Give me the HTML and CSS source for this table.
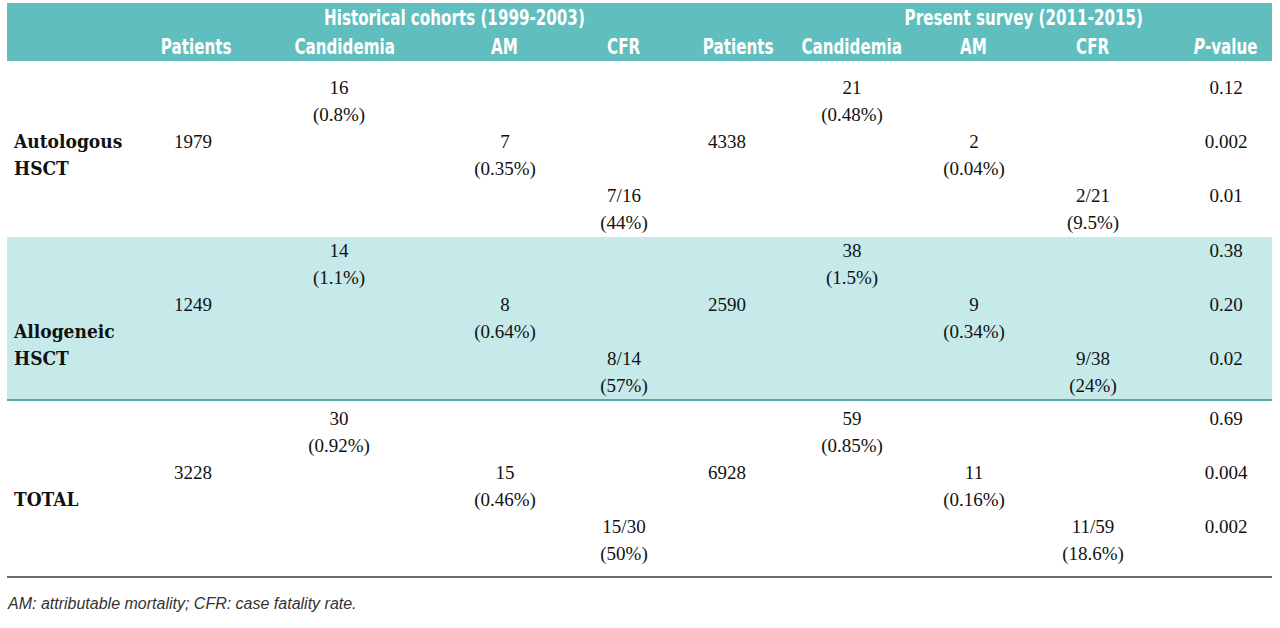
FILE: index.html
```html
<!DOCTYPE html>
<html>
<head>
<meta charset="utf-8">
<link rel="stylesheet" href="styles.css">
</head>
<body>
<div class="table">
  <div class="head">
    <div class="grp grp-hist"><span class="ht">Historical cohorts (1999-2003)</span></div>
    <div class="grp grp-pres"><span class="ht">Present survey (2011-2015)</span></div>
    <div class="hc c1"><span class="ht">Patients</span></div>
    <div class="hc c2"><span class="ht">Candidemia</span></div>
    <div class="hc c3"><span class="ht">AM</span></div>
    <div class="hc c4"><span class="ht">CFR</span></div>
    <div class="hc c5"><span class="ht">Patients</span></div>
    <div class="hc c6"><span class="ht">Candidemia</span></div>
    <div class="hc c7"><span class="ht">AM</span></div>
    <div class="hc c8"><span class="ht">CFR</span></div>
    <div class="hc c9"><span class="ht"><i>P</i>-value</span></div>
  </div>

  <div class="group g1">
    <div class="label lab-3">Autologous<br>HSCT</div>
    <div class="cell c2 r1 cand1">16<br>(0.8%)</div>
    <div class="cell c1 r2">1979</div>
    <div class="cell c3 r2">7<br>(0.35%)</div>
    <div class="cell c4 r3">7/16<br>(44%)</div>
    <div class="cell c6 r1">21<br>(0.48%)</div>
    <div class="cell c5 r2">4338</div>
    <div class="cell c7 r2">2<br>(0.04%)</div>
    <div class="cell c8 r3">2/21<br>(9.5%)</div>
    <div class="cell c9 r1">0.12</div>
    <div class="cell c9 r2">0.002</div>
    <div class="cell c9 r3">0.01</div>
  </div>

  <div class="group g2">
    <div class="label lab-4">Allogeneic<br>HSCT</div>
    <div class="cell c2 r1 cand1">14<br>(1.1%)</div>
    <div class="cell c1 r2">1249</div>
    <div class="cell c3 r2">8<br>(0.64%)</div>
    <div class="cell c4 r3">8/14<br>(57%)</div>
    <div class="cell c6 r1">38<br>(1.5%)</div>
    <div class="cell c5 r2">2590</div>
    <div class="cell c7 r2">9<br>(0.34%)</div>
    <div class="cell c8 r3">9/38<br>(24%)</div>
    <div class="cell c9 r1">0.38</div>
    <div class="cell c9 r2">0.20</div>
    <div class="cell c9 r3">0.02</div>
  </div>

  <div class="group g3">
    <div class="label lab-4">TOTAL</div>
    <div class="cell c2 r1 cand1">30<br>(0.92%)</div>
    <div class="cell c1 r2">3228</div>
    <div class="cell c3 r2">15<br>(0.46%)</div>
    <div class="cell c4 r3">15/30<br>(50%)</div>
    <div class="cell c6 r1">59<br>(0.85%)</div>
    <div class="cell c5 r2">6928</div>
    <div class="cell c7 r2">11<br>(0.16%)</div>
    <div class="cell c8 r3">11/59<br>(18.6%)</div>
    <div class="cell c9 r1">0.69</div>
    <div class="cell c9 r2">0.004</div>
    <div class="cell c9 r3">0.002</div>
  </div>
</div>
<p class="note">AM: attributable mortality; CFR: case fatality rate.</p>
</body>
</html>
```

FILE: styles.css
```css
html, body {
  margin: 0;
  padding: 0;
  background: #ffffff;
}
body {
  padding: 3px 8px 0 7px;
}
.table {
  width: 1265px;
}
.head,
.group {
  display: grid;
  grid-template-columns: 143px 86px 218px 102px 136px 70px 180px 64px 174px 92px;
}
.head {
  background: #60bfbe;
  grid-template-rows: 29px 29px;
  color: #ffffff;
  font-family: "DejaVu Sans Condensed", "DejaVu Sans", sans-serif;
  font-stretch: condensed;
  font-weight: bold;
  font-size: 22px;
  line-height: 29px;
  white-space: nowrap;
}
.ht {
  display: inline-block;
  transform: scaleX(0.765);
  transform-origin: center;
}
.grp {
  grid-row: 1;
  text-align: center;
}
.grp-hist {
  grid-column: 2 / 6;
  padding-left: 66px;
}
.grp-pres {
  grid-column: 7 / 11;
  padding-left: 14px;
}
.hc {
  grid-row: 2;
  text-align: center;
}
.c1 { grid-column: 2; }
.c2 { grid-column: 3; }
.c3 { grid-column: 4; }
.c4 { grid-column: 5; }
.c5 { grid-column: 6; }
.c6 { grid-column: 7; }
.c7 { grid-column: 8; }
.c8 { grid-column: 9; }
.c9 { grid-column: 10; }

.group {
  grid-template-rows: 54px 54px 54px;
  font-family: "Liberation Serif", "Times New Roman", serif;
  font-size: 19px;
  line-height: 27px;
  color: #111111;
}
.g1 {
  padding: 13px 0 1px;
}
.g2 {
  background: #c6eaea;
  padding: 0;
  border-bottom: 2px solid #56a9a8;
}
.g3 {
  padding: 4px 0 9px;
  border-bottom: 2px solid #6d6d6d;
}
.cell {
  text-align: center;
  white-space: nowrap;
}
.cand1 {
  padding-right: 12px;
}
.r1 { grid-row: 1; }
.r2 { grid-row: 2; }
.r3 { grid-row: 3; }
.label {
  grid-column: 1;
  grid-row: 1 / 4;
  padding-left: 7px;
  font-family: "DejaVu Serif Condensed", "DejaVu Serif", serif;
  font-stretch: condensed;
  font-weight: bold;
  font-size: 19px;
  line-height: 27px;
  color: #111111;
  white-space: nowrap;
}
.lab-3 { padding-top: 54px; }
.lab-4 { padding-top: 81px; }

.note {
  margin: 17px 0 0 1px;
  font-family: "Liberation Sans", Arial, sans-serif;
  font-style: italic;
  font-size: 16px;
  line-height: 18px;
  color: #333333;
}
```
